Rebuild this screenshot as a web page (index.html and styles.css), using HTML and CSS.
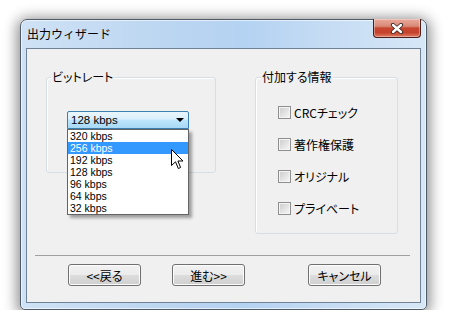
FILE: index.html
```html
<!DOCTYPE html>
<html lang="ja">
<head>
    <meta charset="UTF-8">
    <title>出力ウィザード</title>
    <link rel="stylesheet" href="styles.css">
</head>
<body>
    <div class="window">
        <div class="titlebar">
            <span class="title">出力ウィザード</span>
            <div class="close">
                <svg width="14" height="11" viewBox="0 0 14 11">
                    <path d="M3 2 L11 9 M11 2 L3 9" stroke="#3a2a28" stroke-width="4.2" stroke-linecap="round"/>
                    <path d="M3 2 L11 9 M11 2 L3 9" stroke="#ffffff" stroke-width="2.4" stroke-linecap="round"/>
                </svg>
            </div>
        </div>
        <div class="client">
            <div class="groups">
                <div class="group bitrate">
                    <span class="caption">ビットレート</span>
                    <div class="combo">
                        <span class="combo-text">128 kbps</span>
                        <span class="arrow"></span>
                        <ul class="droplist">
                            <li>320 kbps</li>
                            <li class="selected">256 kbps</li>
                            <li>192 kbps</li>
                            <li>128 kbps</li>
                            <li>96 kbps</li>
                            <li>64 kbps</li>
                            <li>32 kbps</li>
                        </ul>
                        <!-- mouse pointer over the list -->
                        <svg class="pointer" width="13" height="21" viewBox="0 0 13 21">
                            <path d="M0.5 0.5 L0.5 16.5 L4.5 12.8 L7.3 19.5 L9.6 18.5 L6.9 12 L12 12 Z" fill="#ffffff" stroke="#000000" stroke-width="1" stroke-linejoin="miter"/>
                        </svg>
                    </div>
                </div>
                <div class="group info">
                    <span class="caption">付加する情報</span>
                    <label class="check"><span class="box"></span>CRCチェック</label>
                    <label class="check"><span class="box"></span>著作権保護</label>
                    <label class="check"><span class="box"></span>オリジナル</label>
                    <label class="check"><span class="box"></span>プライベート</label>
                </div>
            </div>
            <div class="separator"></div>
            <div class="buttons">
                <button class="btn back">&lt;&lt;戻る</button>
                <button class="btn next">進む&gt;&gt;</button>
                <button class="btn cancel">キャンセル</button>
            </div>
        </div>
    </div>
</body>
</html>
```

FILE: styles.css
```css
body {
    margin: 0;
    padding: 19px 0 0 20px;
    background-color: #ffffff;
    font-family: "Noto Sans CJK JP", sans-serif;
    font-size: 12px;
    color: #000;
}

.window {
    box-sizing: border-box;
    width: 407px;
    height: 291px;
    padding: 0 5px;
    border: 1px solid #4f5b68;
    border-radius: 7px 7px 5px 5px;
    background: linear-gradient(to right, #cfe2f5 0%, #bcd6f1 35%, #b4d2f2 55%, #c9def4 80%, #d6e7f7 100%);
    box-shadow: 0 2px 14px 3px rgba(0, 0, 0, 0.45), inset 0 0 0 1px rgba(255, 255, 255, 0.6);
}

.titlebar {
    height: 28px;
    display: flex;
    justify-content: space-between;
    align-items: flex-start;
}

.title {
    margin-top: 6px;
    margin-left: 1px;
    font-size: 12px;
    line-height: 16px;
    color: #000;
}

.close {
    box-sizing: border-box;
    width: 48px;
    height: 19px;
    margin-top: -1px;
    border: 1px solid #4a1f19;
    border-top: none;
    border-radius: 0 0 4px 4px;
    background: linear-gradient(to bottom, #e9a99a 0%, #d98a78 40%, #c7462f 50%, #c5432c 75%, #df7b62 100%);
    display: flex;
    justify-content: center;
    align-items: center;
    box-shadow: inset 0 0 0 1px rgba(255, 255, 255, 0.35);
}

.client {
    box-sizing: border-box;
    height: 255px;
    border: 1px solid #6f8296;
    background-color: #f0f0f0;
    display: flex;
    flex-direction: column;
}

.groups {
    display: flex;
    align-items: flex-start;
    margin-top: 28px;
    height: 157px;
}

.group {
    box-sizing: border-box;
    border: 1px solid #d5dfe5;
    border-radius: 3px;
    box-shadow: inset 1px 1px 0 #ffffff;
    display: flex;
    flex-direction: column;
    align-items: flex-start;
}

.bitrate {
    width: 170px;
    height: 96px;
    margin-left: 19px;
}

.info {
    width: 143px;
    height: 157px;
    margin-left: 39px;
}

.caption {
    height: 12px;
    line-height: 12px;
    margin-top: -7px;
    padding: 0 1px;
    background-color: #f0f0f0;
    font-feature-settings: "palt";
}

.bitrate .caption {
    margin-left: 4px;
}

.info .caption {
    margin-left: 5px;
}

.combo {
    position: relative;
    box-sizing: border-box;
    width: 122px;
    height: 18px;
    margin-top: 28px;
    margin-left: 20px;
    border: 1px solid #3c7fb1;
    border-radius: 2px 2px 0 0;
    background: linear-gradient(to bottom, #eaf6fd 0%, #d9f0fc 45%, #bee6fd 50%, #a7d9f5 100%);
    display: flex;
    align-items: center;
    justify-content: space-between;
}

.combo-text {
    padding-left: 3px;
    font-family: "Liberation Sans", sans-serif;
    font-size: 11.5px;
    line-height: 14px;
}

.arrow {
    width: 0;
    height: 0;
    margin-right: 4px;
    border-left: 4px solid transparent;
    border-right: 4px solid transparent;
    border-top: 4px solid #000;
}

.droplist {
    position: absolute;
    left: -1px;
    top: 17px;
    width: 122px;
    box-sizing: border-box;
    margin: 0;
    padding: 0;
    list-style: none;
    background-color: #ffffff;
    border: 1px solid #646464;
    box-shadow: 3px 3px 3px rgba(0, 0, 0, 0.35);
    z-index: 2;
}

.droplist li {
    height: 12px;
    line-height: 12px;
    padding-left: 2px;
    font-family: "Liberation Sans", sans-serif;
    font-size: 10.5px;
}

.droplist li.selected {
    background-color: #3399ff;
    color: #ffffff;
}

.pointer {
    position: absolute;
    left: 103px;
    top: 37px;
    z-index: 3;
}

.check {
    display: flex;
    align-items: center;
    height: 13px;
    line-height: 13px;
    margin-left: 22px;
    margin-top: 19px;
    font-feature-settings: "palt";
}

.caption + .check {
    margin-top: 23px;
}

.box {
    box-sizing: border-box;
    width: 13px;
    height: 13px;
    margin-right: 3px;
    border: 1px solid #8f8f8f;
    background: linear-gradient(135deg, #cbcbcb 0%, #e6e6e6 60%, #f7f7f7 100%);
    box-shadow: inset 0 0 0 1px #f4f4f4;
}

.separator {
    height: 1px;
    margin: 21px 10px 0 8px;
    background-color: #a0a0a0;
}

.buttons {
    display: flex;
    margin-top: 8px;
}

.btn {
    box-sizing: border-box;
    width: 73px;
    height: 22px;
    padding: 0;
    border: 1px solid #707070;
    border-radius: 3px;
    background: linear-gradient(to bottom, #f2f2f2 0%, #ebebeb 50%, #dddddd 51%, #cfcfcf 100%);
    box-shadow: inset 0 0 0 1px #fcfcfc;
    font-family: "Noto Sans CJK JP", sans-serif;
    font-size: 12px;
    color: #000;
    font-feature-settings: "palt";
}

.back {
    margin-left: 41px;
}

.next {
    margin-left: 31px;
}

.cancel {
    margin-left: 63px;
}
```
